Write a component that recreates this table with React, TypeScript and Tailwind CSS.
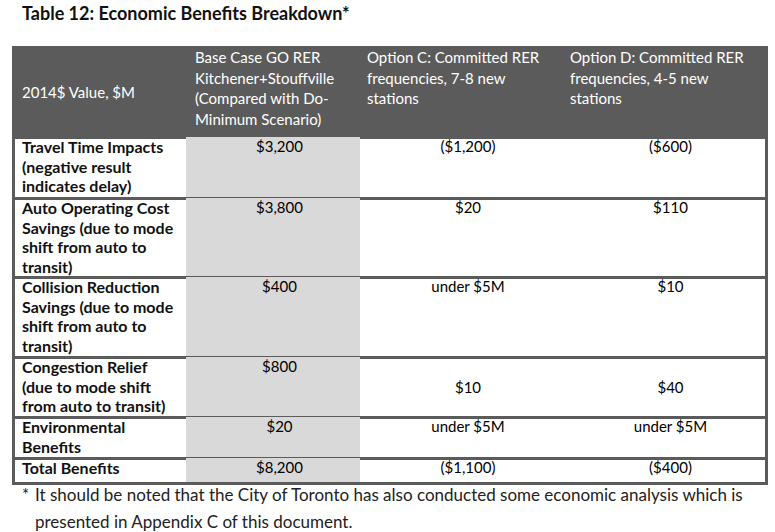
const font = { fontFamily: "Lato, 'Open Sans', sans-serif" }

type Row = {
  label: string[]
  h: string
  base: string
  c: string
  d: string
  middle?: boolean
  last?: boolean
}

const rows: Row[] = [
  { label: ["Travel Time Impacts", "(negative result", "indicates delay)"], h: "h-[61px]", base: "$3,200", c: "($1,200)", d: "($600)" },
  { label: ["Auto Operating Cost", "Savings (due to mode", "shift from auto to", "transit)"], h: "h-[79px]", base: "$3,800", c: "$20", d: "$110" },
  { label: ["Collision Reduction", "Savings (due to mode", "shift from auto to", "transit)"], h: "h-[80px]", base: "$400", c: "under $5M", d: "$10" },
  { label: ["Congestion Relief", "(due to mode shift", "from auto to transit)"], h: "h-[60px]", base: "$800", c: "$10", d: "$40", middle: true },
  { label: ["Environmental", "Benefits"], h: "h-[41px]", base: "$20", c: "under $5M", d: "under $5M" },
  { label: ["Total Benefits"], h: "h-[22px]", base: "$8,200", c: "($1,100)", d: "($400)", last: true },
]

const cols = "grid grid-cols-[171px_174px_203px_202px]"

export default function App() {
  return (
    <div className="w-[775px] h-[532px] bg-white text-black overflow-hidden" style={font}>
      <div className="pl-[22px] pt-[3px] h-[46px] text-[18px] font-bold leading-[20px] text-[#111]">
        Table 12: Economic Benefits Breakdown*
      </div>

      <div className="ml-[12px] w-[756px]">
        {/* header */}
        <div className={`${cols} h-[93px] bg-[#5b5b5b] text-white text-[15px] leading-[20.7px] pl-[3px] pr-[3px]`}>
          <div className="flex items-center pl-[7px]">2014$ Value, $M</div>
          <div className="pl-[9px] pt-[1px]">
            Base Case GO RER<br />Kitchener+Stouffville<br />(Compared with Do-<br />Minimum Scenario)
          </div>
          <div className="pl-[7px] pt-[1px]">
            Option C: Committed RER<br />frequencies, 7-8 new<br />stations
          </div>
          <div className="pl-[7px] pt-[1px]">
            Option D: Committed RER<br />frequencies, 4-5 new<br />stations
          </div>
        </div>

        {/* body */}
        <div className="border-x-[3px] border-b-[3px] border-[#5b5b5b] text-[15px] leading-[19.5px]">
          {rows.map((r, i) => (
            <div
              key={i}
              className={`${cols} ${r.h} ${r.last ? "" : "border-b-[3px] border-[#5b5b5b]"}`}
            >
              <div className="pl-[7px] -mt-[2px] text-[16px] font-bold text-[#111] whitespace-nowrap">
                {r.label.map((l, j) => (
                  <div key={j}>{l}</div>
                ))}
              </div>
              <div className="bg-[#d9d9d9] text-center pl-[13px] -mt-[2px]">
                <div>{r.base}</div>
              </div>
              <div className={`text-center pl-[13px] ${r.middle ? "flex items-center justify-center" : "-mt-[2px]"}`}>
                {r.c}
              </div>
              <div className={`text-center pl-[13px] ${r.middle ? "flex items-center justify-center" : "-mt-[2px]"}`}>
                {r.d}
              </div>
            </div>
          ))}
        </div>
      </div>

      <div className="flex pl-[22px] -mt-[3px] text-[17px] leading-[26.5px] text-[#222]">
        <span className="w-[13px] shrink-0">*</span>
        <span className="w-[720px]">
          It should be noted that the City of Toronto has also conducted some economic analysis which is presented in Appendix C of this document.
        </span>
      </div>
    </div>
  )
}
